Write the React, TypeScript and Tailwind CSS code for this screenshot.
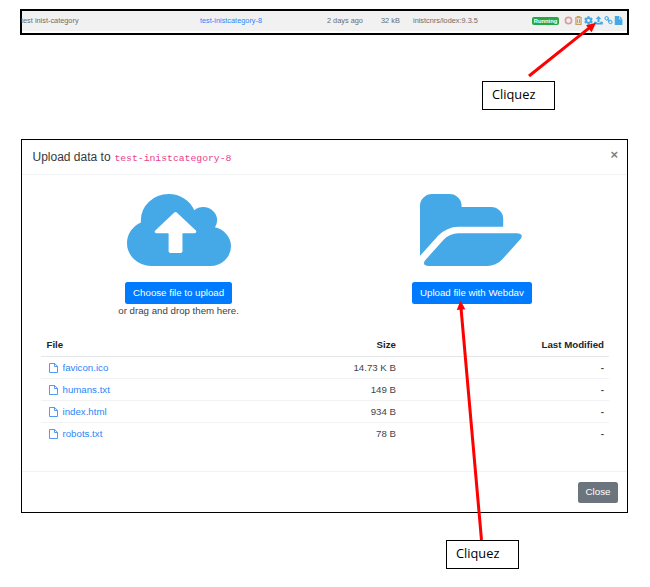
import React from "react";
import { FaCog } from "react-icons/fa";

const files = [
  { name: "favicon.ico", size: "14.73 K B" },
  { name: "humans.txt", size: "149 B" },
  { name: "index.html", size: "934 B" },
  { name: "robots.txt", size: "78 B" },
];

function CloudUpload() {
  return (
    <svg className="w-[104px] h-[72px]" viewBox="0 128 1920 1408" preserveAspectRatio="none" fill="#45a8e7">
      <path d="M1280 864q0-14-9-23l-352-352q-9-9-23-9t-23 9l-351 351q-10 12-10 24 0 14 9 23t23 9h224v352q0 13 9.5 22.5t22.5 9.5h192q13 0 22.5-9.5t9.5-22.5v-352h224q13 0 22.5-9.5t9.5-22.5zm640 288q0 159-112.5 271.5t-271.5 112.5h-1088q-185 0-316.5-131.5t-131.5-316.5q0-130 70-240t188-165q-2-30-2-43 0-212 150-362t362-150q156 0 285.5 87t188.5 231q71-62 166-62 106 0 181 75t75 181q0 76-41 138 130 31 213.5 135.5t83.5 238.5z" />
    </svg>
  );
}

function FolderOpen() {
  return (
    <svg className="w-[104px] h-[72px]" viewBox="0 128 1920 1408" preserveAspectRatio="none" fill="#45a8e7">
      <path d="M1879 952q0 31-31 66l-336 396q-43 51-120.5 86.5t-143.5 35.5h-1088q-34 0-60.5-13t-26.5-43q0-31 31-66l336-396q43-51 120.5-86.5t143.5-35.5h1088q34 0 60.5 13t26.5 43zm-343-344v160h-832q-94 0-197 47.5t-164 119.5l-337 396-5 6q0-4-.5-12.5t-.5-12.5v-960q0-92 66-158t158-66h320q92 0 158 66t66 158v32h544q92 0 158 66t66 158z" />
    </svg>
  );
}

function FileOutline() {
  return (
    <svg className="w-[9px] h-[10px] shrink-0" viewBox="0 0 9 10" fill="none" stroke="#3d8ff5" strokeWidth="0.9">
      <path d="M0.5 0.5H5.6L8.5 3.4V9.5H0.5ZM5.5 0.5V3.5H8.5" />
    </svg>
  );
}

function RowIcons() {
  return (
    <div className="-ml-px flex items-center gap-px text-[#45a8e7]">
      <svg className="w-[9px] h-[9px]" viewBox="0 0 9 9" fill="none" stroke="#dd9ca0" strokeWidth="1.7">
        <circle cx="4.5" cy="4.5" r="3.1" />
      </svg>
      <svg className="w-[9px] h-[9px]" viewBox="0 0 9 9" fill="none" stroke="#c8a067">
        <path d="M1 1.7H8M3.2 1.5V.6H5.8V1.5" strokeWidth="1.1" />
        <path d="M1.9 2V8.3H7.1V2M3.5 3.3V7M5.5 3.3V7" strokeWidth="1.2" />
      </svg>
      <FaCog className="w-[9px] h-[9px]" />
      <svg className="w-[9px] h-[9px]" viewBox="0 0 9 9" fill="currentColor">
        <path d="M4.5 0L7.3 3H5.5V6H3.5V3H1.7ZM0.2 5.8H2.8V6.8H6.2V5.8H8.8V8.5H0.2Z" />
      </svg>
      <svg className="w-[9px] h-[9px]" viewBox="0 0 1792 1792" fill="currentColor">
        <path d="M1520 1216q0-40-28-68l-208-208q-28-28-68-28-42 0-72 32 3 3 19 18.5t21.5 21.5 15 19 13 25.5 3.5 27.5q0 40-28 68t-68 28q-15 0-27.5-3.5t-25.5-13-19-15-21.5-21.5-18.5-19q-33 31-33 73 0 40 28 68l206 207q27 27 68 27 40 0 68-26l147-146q28-28 28-67zm-703-705q0-40-28-68l-206-207q-28-28-68-28-39 0-68 27l-147 146q-28 28-28 67 0 40 28 68l208 208q27 27 68 27 42 0 72-31-3-3-19-18.5t-21.5-21.5-15-19-13-25.5-3.5-27.5q0-40 28-68t68-28q15 0 27.5 3.5t25.5 13 19 15 21.5 21.5 18.5 19q33-31 33-73zm895 705q0 120-85 203l-147 146q-83 83-203 83-121 0-204-85l-206-207q-83-83-83-203 0-123 88-209l-88-88q-86 88-208 88-120 0-204-84l-208-208q-84-84-84-204t85-203l147-146q83-83 203-83 121 0 204 85l206 207q83 83 83 203 0 123-88 209l88 88q86-88 208-88 120 0 204 84l208 208q84 84 84 204z" />
      </svg>
      <svg className="w-[9px] h-[9px]" viewBox="0 0 9 9" fill="currentColor">
        <path d="M0.8 0H5V3.3H8.4V9H0.8ZM5.6 0L8.4 2.7H5.6Z" />
      </svg>
    </div>
  );
}

function InstanceRow() {
  return (
    <div className="ml-5 w-[609px] h-[26px] border-2 border-black bg-white">
      <div className="grid h-5 grid-cols-[178px_127px_54px_32px_119px_33px_1fr] items-center bg-[#f1f1f1] pb-px text-[7.35px] leading-[10px] text-[#6c6c6c] whitespace-nowrap">
        <span className="-ml-px">test inist-category</span>
        <span className="text-[#2a86fb]">test-inistcategory-8</span>
        <span>2 days ago</span>
        <span>32 kB</span>
        <span>inistcnrs/lodex:9.3.5</span>
        <span className="flex h-2 w-[27px] items-center justify-center rounded-[2px] bg-[#28a745] text-[5.8px] font-bold text-white">Running</span>
        <RowIcons />
      </div>
    </div>
  );
}

function UploadDialog() {
  return (
    <section className="ml-[21px] mt-[104px] flex h-[374px] w-[607px] flex-col border border-black bg-white">
      <header className="flex h-[35px] items-center justify-between border-b border-[#f1f2f3] pl-[10.5px] pr-[9px]">
        <h1 className="text-[12px] text-[#343a40] whitespace-nowrap">
          Upload data to <code className="ml-[0.5px] font-['Liberation_Mono',monospace] text-[9.75px] text-[#e83e8c]">test-inistcategory-8</code>
        </h1>
        <span className="pb-[5px] text-[13px] font-bold leading-none text-[#7f7f7f]">×</span>
      </header>
      <div className="grid grid-cols-2 pl-[10.5px] pr-[10px] pt-[19px] text-[9.7px]">
        <div className="flex flex-col items-center">
          <CloudUpload />
          <button className="mt-4 h-[22px] w-[107px] rounded-[2.5px] bg-[#007bff] text-white">Choose file to upload</button>
          <p className="text-[#3c4146] leading-[14px]">or drag and drop them here.</p>
        </div>
        <div className="flex flex-col items-center pl-[2px]">
          <FolderOpen />
          <button className="mt-4 h-[22px] w-[120px] rounded-[2.5px] bg-[#007bff] text-white">Upload file with Webdav</button>
        </div>
      </div>
      <table className="ml-[19px] mt-[15px] w-[568px] table-fixed border-collapse text-[9.7px] leading-[14px] text-[#3f4449]">
        <thead>
          <tr className="h-[23px] border-b border-[#e4e6e8] text-[#212529]">
            <th className="w-[160px] pl-[5.5px] pt-px text-left">File</th>
            <th className="w-[200px] pr-[5px] pt-px text-right">Size</th>
            <th className="pr-[5px] pt-px text-right">Last Modified</th>
          </tr>
        </thead>
        <tbody>
          {files.map((file) => (
            <tr key={file.name} className="h-[22px] border-b border-[#f1f2f3] last:border-0">
              <td className="pl-2 pt-px">
                <a className="flex items-center gap-[4.5px] text-[#2a86fb]">
                  <FileOutline />
                  {file.name}
                </a>
              </td>
              <td className="pr-[5px] pt-px text-right">{file.size}</td>
              <td className="pr-[5px] pt-px text-right font-bold">-</td>
            </tr>
          ))}
        </tbody>
      </table>
      <footer className="mt-auto flex h-[41px] items-center justify-end border-t border-[#f1f2f3] pr-[9px]">
        <button className="h-[21px] w-[40px] rounded-[2.5px] bg-[#6c757d] text-[9.8px] text-white">Close</button>
      </footer>
    </section>
  );
}

export default function App() {
  return (
    <main className="relative h-[587px] w-[650px] overflow-hidden bg-white pt-[9px] font-['Liberation_Sans',Arial,sans-serif]">
      <InstanceRow />
      <UploadDialog />
      <div className="absolute left-[482px] top-[81px] h-[29px] w-[73px] border border-black bg-white pl-[9px] font-['Open_Sans',sans-serif] text-[12.8px] leading-[25px] text-black">Cliquez</div>
      <div className="absolute left-[446px] top-[540px] h-[29px] w-[73px] border border-black bg-white pl-[9px] font-['Open_Sans',sans-serif] text-[12.8px] leading-[25px] text-black">Cliquez</div>
      <svg className="pointer-events-none absolute inset-0" width="650" height="587" fill="#ff0000" stroke="#ff0000">
        <path d="M529 76L589 28.2M481.5 540L461 308" strokeWidth="3" fill="none" />
        <path d="M596 22.7L591.6 32.3L586 25.3ZM460.5 300.5L465.3 309.2L456.8 309.9Z" stroke="none" />
      </svg>
    </main>
  );
}
